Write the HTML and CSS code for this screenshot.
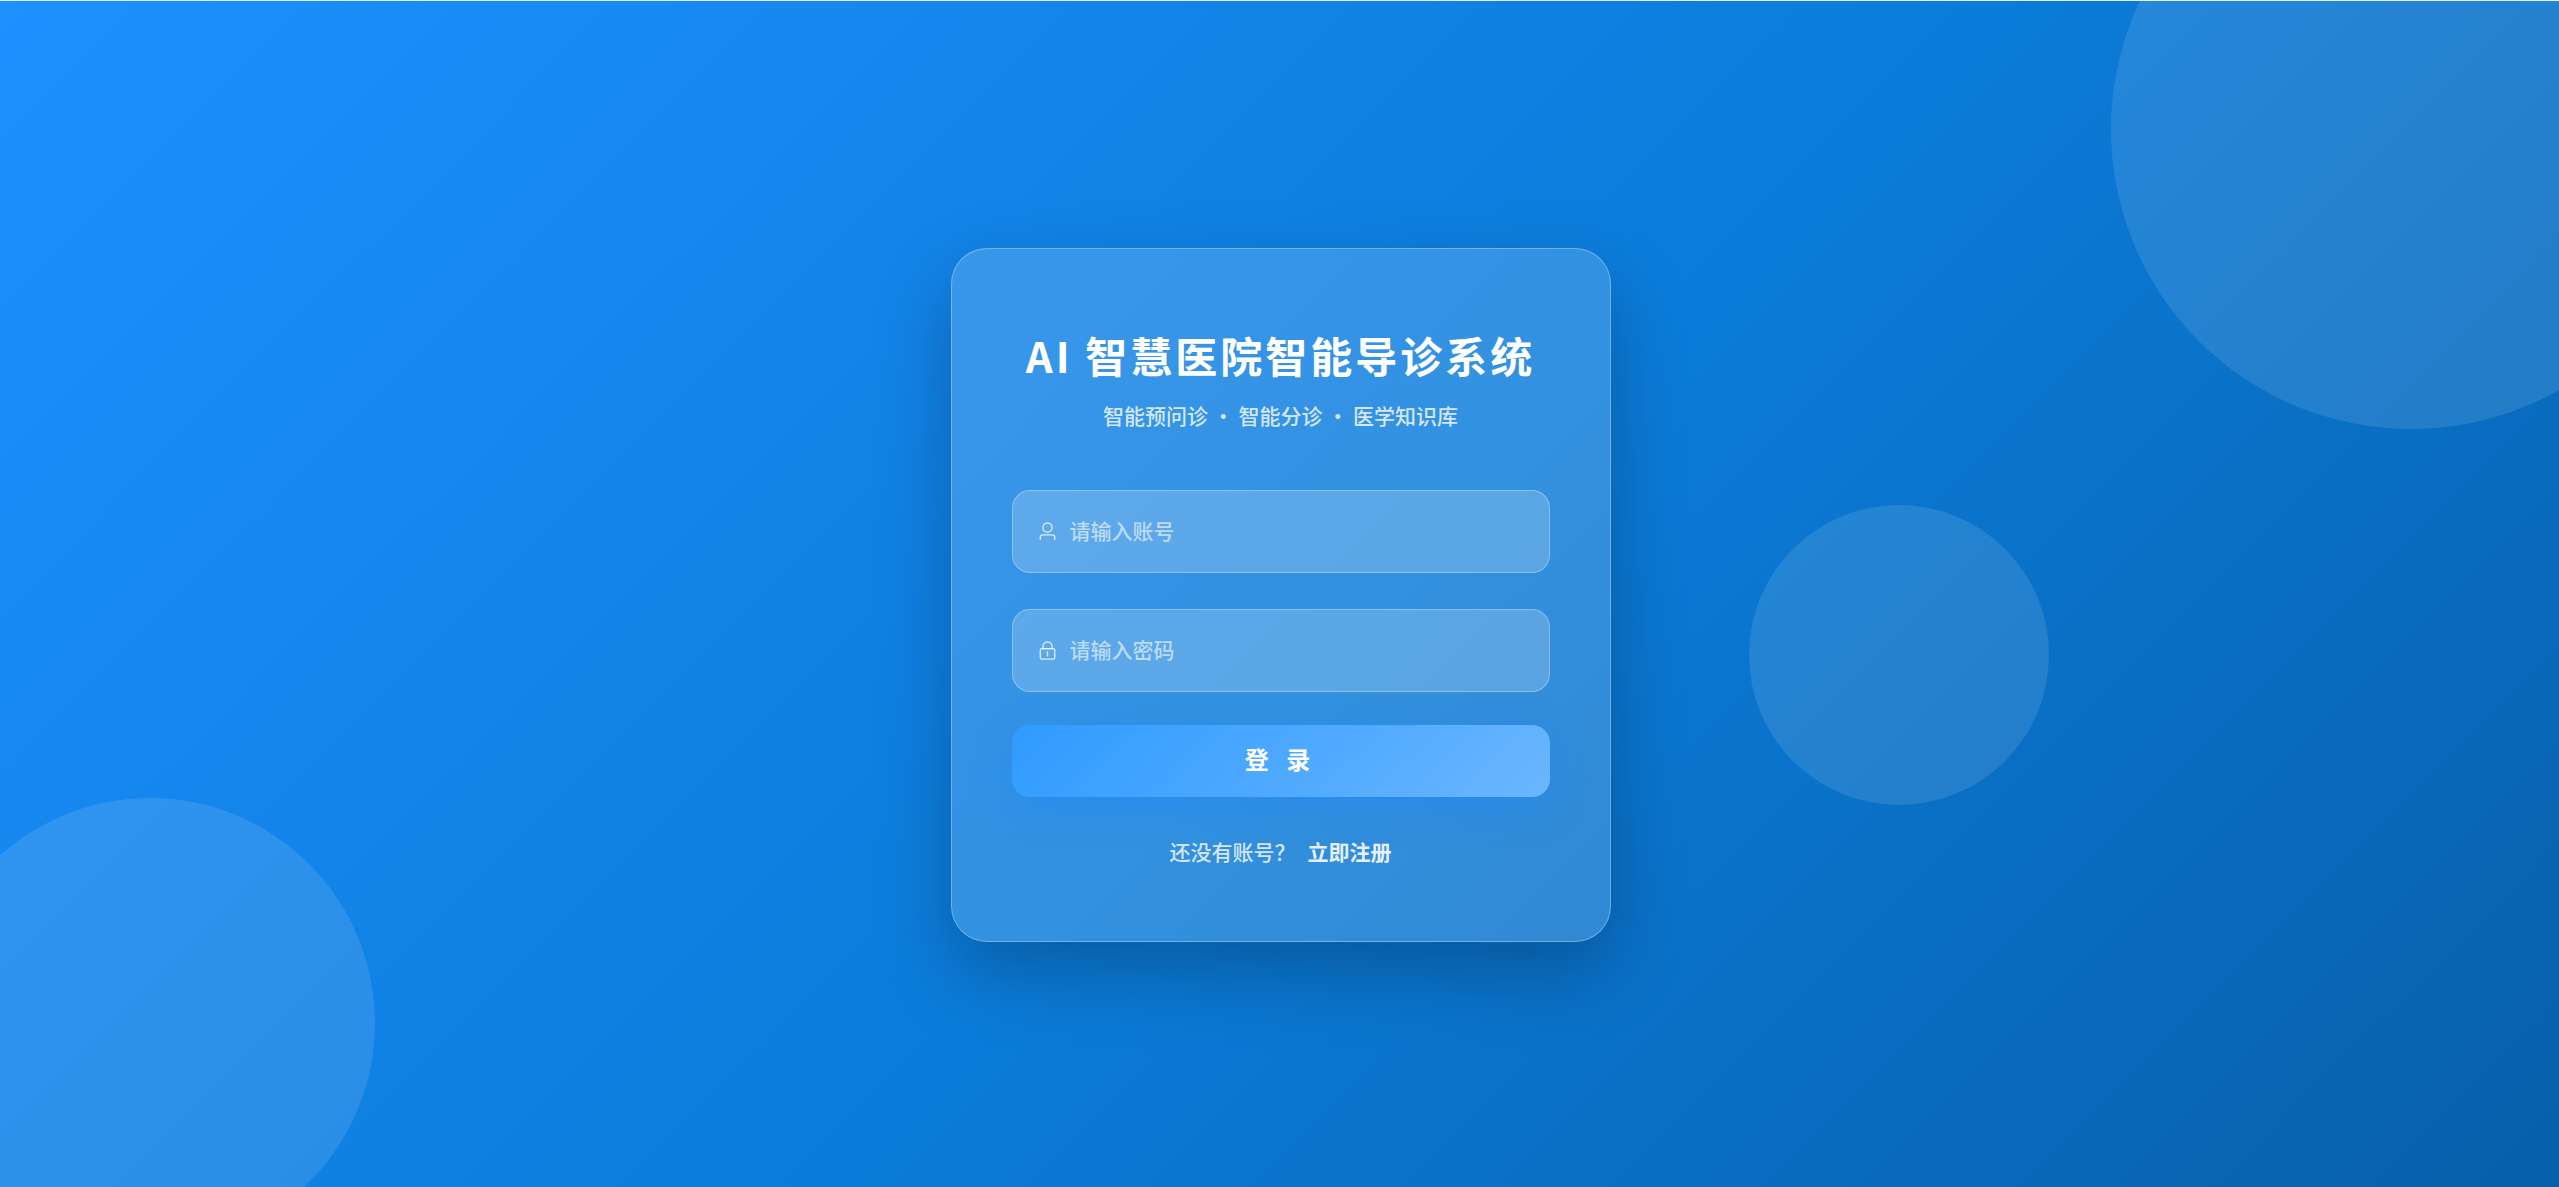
FILE: index.html
```html
<!DOCTYPE html>
<html lang="zh-CN">
<head>
    <meta charset="UTF-8">
    <meta name="viewport" content="width=device-width, initial-scale=1">
    <title>AI 智慧医院智能导诊系统</title>
    <link rel="stylesheet" href="styles.css">
</head>
<body>
<div class="login-page">
    <i class="circle circle-1"></i>
    <i class="circle circle-2"></i>
    <i class="circle circle-3"></i>

    <main class="login-card">
        <h1 class="login-title">AI 智慧医院智能导诊系统</h1>
        <p class="login-subtitle">智能预问诊 · 智能分诊 · 医学知识库</p>

        <form class="login-form">
            <label class="field">
                <svg class="field-icon" viewBox="0 0 1024 1024" aria-hidden="true">
                    <path d="M512 512a192 192 0 1 0 0-384 192 192 0 0 0 0 384m0 64a256 256 0 1 1 0-512 256 256 0 0 1 0 512m320 320v-96a96 96 0 0 0-96-96H288a96 96 0 0 0-96 96v96a32 32 0 1 1-64 0v-96a160 160 0 0 1 160-160h448a160 160 0 0 1 160 160v96a32 32 0 1 1-64 0"/>
                </svg>
                <input class="field-input" type="text" placeholder="请输入账号" aria-label="账号">
            </label>
            <label class="field">
                <svg class="field-icon" viewBox="0 0 1024 1024" aria-hidden="true">
                    <path d="M224 448a32 32 0 0 0-32 32v384a32 32 0 0 0 32 32h576a32 32 0 0 0 32-32V480a32 32 0 0 0-32-32zm0-64h576a96 96 0 0 1 96 96v384a96 96 0 0 1-96 96H224a96 96 0 0 1-96-96V480a96 96 0 0 1 96-96"/>
                    <path d="M512 544a32 32 0 0 1 32 32v192a32 32 0 1 1-64 0V576a32 32 0 0 1 32-32m192-160v-64a192 192 0 1 0-384 0v64zM512 64a256 256 0 0 1 256 256v128H256V320A256 256 0 0 1 512 64"/>
                </svg>
                <input class="field-input" type="password" placeholder="请输入密码" aria-label="密码">
            </label>
            <button class="btn-login" type="button">登 录</button>
        </form>

        <div class="login-footer">
            <span>还没有账号？</span>
            <a href="#" class="register-link">立即注册</a>
        </div>
    </main>
</div>
</body>
</html>
```
FILE: styles.css
```css
* {
    box-sizing: border-box;
}
body {
    margin: 0;
    font-family: "Noto Sans CJK SC", sans-serif;
    font-weight: 500;
    color: #fff;
}
.login-page {
    position: relative;
    display: flex;
    align-items: center;
    justify-content: center;
    min-height: 100vh;
    padding: 18px 16px 16px 18px;
    overflow: hidden;
    border-top: 1px solid #e4effa;
    background: linear-gradient(135deg, #1e90ff 0%, #0b7cda 53%, #085faa 100%);
}

/* 背景圆 */
.circle {
    position: absolute;
    border-radius: 50%;
    background: rgba(255, 255, 255, .11);
}
.circle-1 {
    top: -172px;
    right: -152px;
    width: 600px;
    height: 600px;
}
.circle-2 {
    left: -75px;
    bottom: -61px;
    width: 450px;
    height: 450px;
}
.circle-3 {
    top: 504px;
    right: 510px;
    width: 300px;
    height: 300px;
}

.login-card {
    position: relative;
    width: 660px;
    max-width: 100%;
    padding: 70px 60px 74px;
    border: 1px solid rgba(255, 255, 255, .3);
    border-radius: 36px;
    background: rgba(255, 255, 255, .16);
    box-shadow: 0 30px 75px rgba(0, 0, 0, .25);
}
.login-title {
    margin: 0;
    font-size: 42px;
    line-height: 72px;
    font-weight: 700;
    letter-spacing: 3px;
    text-align: center;
    white-space: nowrap;
}
.login-subtitle {
    margin: 8px 0 0;
    font-size: 21px;
    line-height: 32px;
    text-align: center;
    color: rgba(255, 255, 255, .8);
}
.login-form {
    margin-top: 59px;
}
.field {
    display: flex;
    align-items: center;
    gap: 12px;
    height: 83px;
    margin-bottom: 36px;
    padding: 0 24px;
    border: 1px solid rgba(255, 255, 255, .3);
    border-radius: 18px;
    background: rgba(255, 255, 255, .2);
}
.field:last-of-type {
    margin-bottom: 33px;
}
.field-icon {
    flex: none;
    width: 21px;
    height: 21px;
    fill: rgba(255, 255, 255, .8);
}
.field-input {
    flex: 1;
    min-width: 0;
    padding: 0 0 4px;
    border: 0;
    outline: 0;
    background: none;
    font: 500 21px/32px "Noto Sans CJK SC", sans-serif;
    color: #fff;
}
.field-input::placeholder {
    color: rgba(255, 255, 255, .6);
}
.btn-login {
    display: block;
    width: 100%;
    height: 72px;
    padding: 0 0 4px;
    border: 0;
    border-radius: 18px;
    background: linear-gradient(135deg, #2f9bff 0%, #6bb6ff 100%);
    box-shadow: 0 12px 36px rgba(30, 136, 255, .4);
    font: 700 24px/36px "Noto Sans CJK SC", sans-serif;
    letter-spacing: 6px;
    color: #fff;
}
.login-footer {
    display: flex;
    justify-content: center;
    gap: 12px;
    margin-top: 38px;
    font-size: 21px;
    line-height: 32px;
    color: rgba(255, 255, 255, .8);
}
.register-link {
    font-weight: 700;
    color: rgba(255, 255, 255, .9);
    text-decoration: none;
}
```
